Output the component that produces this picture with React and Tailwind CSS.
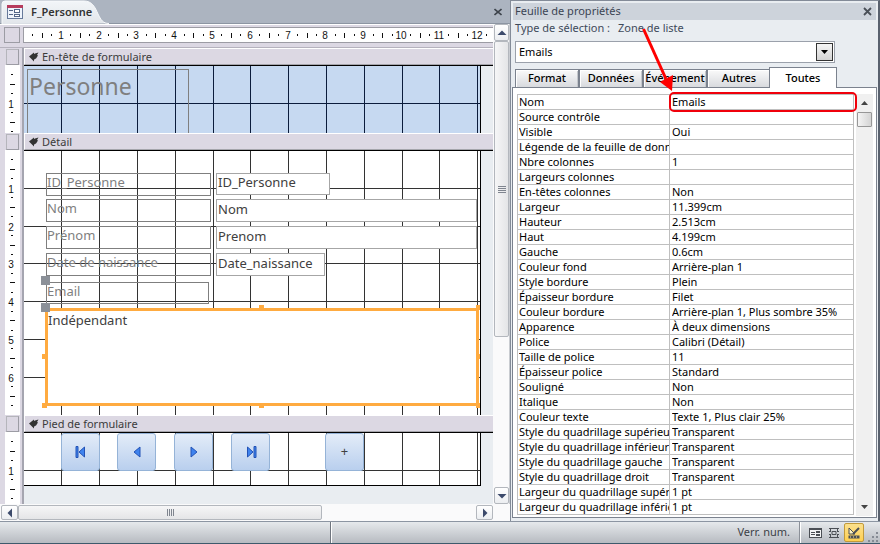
import React from "react";

const CM = 37.8;

const FONT = "font-['Noto_Sans','Open_Sans',sans-serif]";

const properties = [
  ["Nom", "Emails"],
  ["Source contrôle", ""],
  ["Visible", "Oui"],
  ["Légende de la feuille de données", ""],
  ["Nbre colonnes", "1"],
  ["Largeurs colonnes", ""],
  ["En-têtes colonnes", "Non"],
  ["Largeur", "11.399cm"],
  ["Hauteur", "2.513cm"],
  ["Haut", "4.199cm"],
  ["Gauche", "0.6cm"],
  ["Couleur fond", "Arrière-plan 1"],
  ["Style bordure", "Plein"],
  ["Épaisseur bordure", "Filet"],
  ["Couleur bordure", "Arrière-plan 1, Plus sombre 35%"],
  ["Apparence", "À deux dimensions"],
  ["Police", "Calibri (Détail)"],
  ["Taille de police", "11"],
  ["Épaisseur police", "Standard"],
  ["Souligné", "Non"],
  ["Italique", "Non"],
  ["Couleur texte", "Texte 1, Plus clair 25%"],
  ["Style du quadrillage supérieur", "Transparent"],
  ["Style du quadrillage inférieur", "Transparent"],
  ["Style du quadrillage gauche", "Transparent"],
  ["Style du quadrillage droit", "Transparent"],
  ["Largeur du quadrillage supérieur", "1 pt"],
  ["Largeur du quadrillage inférieur", "1 pt"],
];

/* Ruler graduations: dots on the quarters, a tick on the half, a number on each centimetre. */
function Ruler({ vertical = false, count }) {
  const marks = [];
  for (let i = 1; i < count * 4 + 4; i++) {
    const p = Math.round((i * CM) / 4) - (vertical ? 0 : 1);
    if (i % 4 === 0) {
      marks.push(
        <text key={i} x={vertical ? 6 : p} y={vertical ? p + 5 : 11} textAnchor="middle" fontSize="10">
          {i / 4}
        </text>
      );
    } else {
      const long = i % 4 === 2;
      const len = long ? 5 : 2;
      marks.push(
        vertical ? (
          <rect key={i} x={7 - Math.floor(len / 2)} y={p} width={len} height="1" />
        ) : (
          <rect key={i} x={p} y={7 - Math.floor(len / 2)} width="1" height={len} />
        )
      );
    }
  }
  return (
    <svg className="absolute inset-0 h-full w-full overflow-hidden font-['Liberation_Sans',sans-serif]" fill="#111" shapeRendering="crispEdges" aria-hidden="true">
      {marks}
    </svg>
  );
}

function Grid({ color }) {
  return (
    <svg className="absolute inset-0 h-full w-full" fill={color} shapeRendering="crispEdges" aria-hidden="true">
      {Array.from({ length: 12 }, (_, i) => (
        <rect key={"v" + i} x={Math.floor((i + 1) * CM)} y="0" width="1" height="100%" />
      ))}
      {Array.from({ length: 6 }, (_, i) => (
        <rect key={"h" + i} x="0" y={Math.round((i + 1) * CM)} width="100%" height="1" />
      ))}
    </svg>
  );
}

function Section({ title, height, count, surface, grid, children, last }) {
  return (
    <section className={last ? "flex min-h-0 flex-1 flex-col" : "flex flex-col"}>
      <div className="flex h-[17px] shrink-0">
        <div className="flex w-6 shrink-0 border-r-2 border-[#a5a5b0] bg-[#dcd8e3] pl-1.5 pt-px">
          <button type="button" aria-label={"Sélectionner " + title} className="h-4 w-[13px] border border-r-[#9c9ca4] border-b-[#9c9ca4] border-l-[#b5b5bb] border-t-[#b5b5bb] bg-[#dcd8e3]" />
        </div>
        <h2 className="flex min-w-0 flex-1 items-center gap-[3px] border-b border-l border-t border-b-[#a5a5ab] border-l-white border-t-white bg-[#dcd8e3] pl-1 pt-px text-[11px] font-normal text-[#3b3b3b]">
          <svg width="10" height="10" viewBox="0 0 10 10" fill="#333" aria-hidden="true">
            <path d="M0 4.500 5 .5V2l1-.5 3.500-1L8 3l1 .5-1 1.500C7 7 6 7 5 7.500V9.500z" />
          </svg>
          {title}
        </h2>
      </div>
      <div className={last ? "flex min-h-0 flex-1" : "flex"}>
        <div className="flex w-6 shrink-0 border-r-2 border-[#a5a5b0] bg-[#dcd8e3] pl-[5px]">
          <div className={"relative w-[15px] overflow-hidden bg-white " + (last ? "" : height)}>
            <Ruler vertical count={count} />
          </div>
        </div>
        <div className="min-w-0 flex-1 bg-[#e9edf1]">
          <div className="h-px bg-black" />
          <div className={"relative -mt-px w-[457px] overflow-hidden border-r border-t border-black " + height + " " + surface + (last ? " border-b" : "")}>
            <div className="absolute inset-x-0 -top-px bottom-0">
              <Grid color={grid} />
              {children}
            </div>
          </div>
        </div>
      </div>
    </section>
  );
}

const labels = [
  ["ID_Personne", "f-id", "top-[23px] h-[23px] w-[165px]"],
  ["Nom", "f-nom", "top-[49px] h-[23px] w-[165px]"],
  ["Prénom", "f-prenom", "top-[76px] h-[23px] w-[165px]"],
  ["Date de naissance", "f-date", "top-[103px] h-[23px] w-[165px]"],
  ["Email", "f-email", "top-[132px] h-[22px] w-[163px]"],
];

const fields = [
  ["ID_Personne", "f-id", "top-[23px] h-[22px] w-[114px]"],
  ["Nom", "f-nom", "top-[49px] h-[23px] w-[261px]"],
  ["Prenom", "f-prenom", "top-[76px] h-[23px] w-[261px]"],
  ["Date_naissance", "f-date", "top-[103px] h-[23px] w-[109px]"],
];

const handles = [
  "left-[235px] top-[155px]",
  "left-[452px] top-[155px]",
  "left-[18px] top-[204px]",
  "left-[452px] top-[204px]",
  "left-[18px] top-[253px]",
  "left-[235px] top-[253px]",
  "left-[452px] top-[253px]",
];

const navButtons = [
  ["Premier", "left-[37px]", <><path d="M1 .5h2v11H1z" /><path d="M9.500 1v10L4 6z" /></>],
  ["Précédent", "left-[93px]", <path d="M9 1v10L3 6z" />],
  ["Suivant", "left-[150px]", <path d="M3 1v10l6-5z" />],
  ["Dernier", "left-[207px]", <><path d="M2.500 1v10L8 6z" /><path d="M9 .5h2v11H9z" /></>],
];

const NAV =
  "absolute top-px flex h-[38px] w-[39px] items-center justify-center rounded-[3px] border border-[#95b3d7] bg-linear-to-b from-[#e3ecf8] to-[#b9cfee] ";

function Arrow({ d }) {
  return (
    <svg width="10" height="10" viewBox="0 0 10 10" fill="#3c4a6b" aria-hidden="true">
      <path d={d} />
    </svg>
  );
}

const SCROLL_BTN = "flex shrink-0 items-center justify-center rounded-[2px] border border-[#b3b7bd] bg-linear-to-b from-white to-[#eceef1] ";

function Designer() {
  return (
    <main className="flex min-w-0 flex-1 flex-col bg-white">
      <header className="flex h-6 shrink-0 items-start border-b border-[#8c95a2] bg-[#acb4c0]">
        <div className="relative h-6 w-[110px] shrink-0">
          <svg className="absolute inset-0" width="110" height="24" aria-hidden="true">
            <defs>
              <linearGradient id="tab" x1="0" y1="0" x2="0" y2="1">
                <stop offset="0" stopColor="#f2f5f8" />
                <stop offset="1" stopColor="#e2e6eb" />
              </linearGradient>
            </defs>
            <path d="M2 24V4Q2 1 5 1H84C92 1 95 7 98 14 101 20 103 23.500 109 23.500" fill="url(#tab)" stroke="#f7f9fb" />
          </svg>
          <button type="button" className="relative flex h-6 items-center gap-2 pl-[7px] text-[11px] font-semibold text-[#333]">
            <svg width="16" height="14" viewBox="0 0 16 14" shapeRendering="crispEdges" aria-hidden="true">
              <path d="M0 0h16v14H0z" fill="#66799a" />
              <path d="M1 3h14v10H1z" fill="#eef3fb" />
              <path d="M0 0h16v3H0z" fill="#b63b5c" />
              <path d="M2 5h4v1H2zM2 9h4v1H2zM7 4h6v4H7zM7 9h6v3H7z" fill="#536688" />
              <path d="M8 5h4v2H8zM8 10h4v1H8z" fill="#fff" />
            </svg>
            F_Personne
          </button>
        </div>
        <div className="flex-1" />
        <button type="button" aria-label="Fermer le formulaire" className="mr-2 flex h-6 w-2 items-center text-[#3e444c]">
          <svg width="8" height="8" viewBox="0 0 8 8" stroke="currentColor" strokeWidth="1.600" aria-hidden="true">
            <path d="m.5 1 7 6M7.500 1l-7 6" />
          </svg>
        </button>
      </header>

      <div className="flex min-h-0 flex-1 flex-col">
        <div className="flex min-h-0 flex-1">
          <div className="flex min-w-0 flex-1 flex-col bg-[#dcd8e3]">
            <div className="flex h-6 shrink-0 gap-[3px] border-b border-t border-b-[#b5b2bd] border-t-white bg-[#dcd8e3] pb-1 pl-1 pt-0.5">
              <button type="button" aria-label="Sélectionner le formulaire" className="h-4 w-4 border border-[#9c9ca4] bg-[#dcd8e3]" />
              <div className="relative min-w-0 flex-1 border border-r-0 border-[#9c9ca4] bg-white">
                <Ruler count={12} />
              </div>
            </div>

            <Section title="En-tête de formulaire" height="h-[68px]" count={1} surface="bg-[#c6d9f1]" grid="#0b1c3c">
              <div className="absolute left-[3px] top-1 h-20 w-[162px] border border-[#7f7f7f] pl-px text-[23px] leading-8 text-[#7f7f7f]">Personne</div>
            </Section>

            <Section title="Détail" height="h-[265px]" count={6} surface="bg-white" grid="#333">
              {labels.map(([text, id, box]) => (
                <label key={id} htmlFor={id} className={"absolute left-[22px] border border-[#7f7f7f] text-[13px] leading-4 text-[#7f7f7f] " + box}>
                  {text}
                </label>
              ))}
              {fields.map(([text, id, box]) => (
                <input key={id} id={id} readOnly value={text} className={"absolute left-48 border border-[#a6a6a6] bg-white px-px pb-1 text-[13px] text-[#404040] outline-none " + box} />
              ))}
              <select id="f-email" size={4} className="absolute left-[21px] top-[158px] h-[98px] w-[434px] appearance-none overflow-hidden border-[3px] border-[#ffab40] bg-white text-[13px] text-[#404040] outline-none">
                <option className="p-0 leading-4">Indépendant</option>
              </select>
              {handles.map((pos) => (
                <span key={pos} className={"absolute h-[5px] w-[5px] bg-[#ffab40] " + pos} />
              ))}
              <span className="absolute left-[17px] top-[126px] h-[9px] w-[9px] bg-[#8b9098]" />
              <span className="absolute left-[17px] top-[153px] h-[9px] w-[9px] bg-[#8b9098]" />
            </Section>

            <Section last title="Pied de formulaire" height="h-[54px]" count={1} surface="bg-white" grid="#333">
              {navButtons.map(([name, pos, shape]) => (
                <button key={name} type="button" aria-label={name} className={NAV + pos}>
                  <svg width="12" height="12" viewBox="0 0 12 12" fill="#3f83ee" stroke="#2352b5" strokeWidth="1" aria-hidden="true">
                    {shape}
                  </svg>
                </button>
              ))}
              <button type="button" className={NAV + "left-[301px] text-[13px] text-[#404040]"}>+</button>
            </Section>
          </div>

          <div className="flex w-[17px] shrink-0 flex-col border-r border-[#c9ccd1] bg-[#fafafb] pl-px">
            <button type="button" aria-label="Défiler vers le haut" className={SCROLL_BTN + "h-[17px]"}>
              <Arrow d="M5 2.500 9.500 7H.5z" />
            </button>
            <div className="flex h-[296px] items-center justify-center rounded-[2px] border border-[#b3b7bd] bg-linear-to-r from-[#f6f6f7] to-[#e4e5e7]">
              <div className="flex w-2 flex-col gap-px">
                <i className="h-px bg-[#7f858f]" />
                <i className="h-px bg-[#7f858f]" />
                <i className="h-px bg-[#7f858f]" />
                <i className="h-px bg-[#7f858f]" />
              </div>
            </div>
            <div className="flex-1" />
            <button type="button" aria-label="Défiler vers le bas" className={SCROLL_BTN + "h-[17px]"}>
              <Arrow d="M5 7.500 9.500 3H.5z" />
            </button>
          </div>
        </div>

        <div className="flex h-[17px] shrink-0 bg-[#fafafb] pb-px pl-px pr-[17px] pt-px">
          <button type="button" aria-label="Défiler vers la gauche" className={SCROLL_BTN + "w-[17px]"}>
            <Arrow d="M2.500 5 7 .5v9z" />
          </button>
          <div className="flex w-[304px] items-center justify-center gap-px rounded-[2px] border border-[#b3b7bd] bg-linear-to-b from-[#f6f6f7] to-[#e4e5e7]">
            <i className="h-[7px] w-px bg-[#7f858f]" />
            <i className="h-[7px] w-px bg-[#7f858f]" />
            <i className="h-[7px] w-px bg-[#7f858f]" />
            <i className="h-[7px] w-px bg-[#7f858f]" />
          </div>
          <div className="flex-1" />
          <button type="button" aria-label="Défiler vers la droite" className={SCROLL_BTN + "w-[17px]"}>
            <Arrow d="M7.500 5 3 .5v9z" />
          </button>
        </div>
      </div>
    </main>
  );
}

const TAB =
  "flex h-[18px] w-16 items-center justify-center border border-b-0 border-[#7b828e] bg-linear-to-b from-[#fafafa] to-[#d8dade] text-[11px] font-medium text-black shadow-[inset_1px_1px_0_#fff,inset_-1px_0_0_#c4c7cc]";

function PropertySheet() {
  return (
    <aside className="relative flex w-[370px] shrink-0 flex-col border-l border-r-2 border-t border-l-[#838b98] border-r-[#59616e] border-t-[#838b98] bg-[#e9edf1] pb-[3px] pl-px pr-px pt-0.5 text-[11px]">
      <div className="mx-px flex h-[17px] shrink-0 items-center justify-between bg-[#cdd3db] pl-0.5 pr-1 text-[11px] text-[#3b4453]">
        <h1>Feuille de propriétés</h1>
        <button type="button" aria-label="Fermer la feuille de propriétés" className="text-[#4a5058]">
          <svg width="9" height="9" viewBox="0 0 9 9" stroke="currentColor" strokeWidth="1.800" aria-hidden="true">
            <path d="m1 1 7 7M8 1 1 8" />
          </svg>
        </button>
      </div>
      <div className="flex h-[21px] shrink-0 gap-2 pl-[3px] leading-4 text-[#3f4a5a]">
        <span>Type de sélection :</span>
        <span>Zone de liste</span>
      </div>
      <div className="relative ml-[3px] mr-[42px] h-[22px] shrink-0">
        <select aria-label="Objet sélectionné" className="h-full w-full appearance-none border border-[#9ba1ab] bg-white pl-[3px] text-[11px] text-black">
          <option>Emails</option>
        </select>
        <span className="pointer-events-none absolute right-0.5 top-0.5 flex h-[18px] w-[17px] items-center justify-center border border-[#333] bg-linear-to-b from-[#f5f5f5] to-[#d4d4d4]">
          <svg width="7" height="4" viewBox="0 0 7 4" aria-hidden="true">
            <path d="M0 0h7L3.500 4z" />
          </svg>
        </span>
      </div>
      <div role="tablist" className="mt-1 flex shrink-0 items-end pl-[3px]">
        <button type="button" role="tab" className={TAB}>Format</button>
        <button type="button" role="tab" className={TAB}>Données</button>
        <button type="button" role="tab" className={TAB}>Événement</button>
        <button type="button" role="tab" className={TAB}>Autres</button>
        <button type="button" role="tab" aria-selected="true" className="relative -mb-px -ml-0.5 flex h-[21px] w-[68px] items-center justify-center border border-b-0 border-[#7b828e] bg-white text-[11px] font-medium text-black">
          Toutes
        </button>
      </div>
      <div className="flex min-h-0 flex-1 gap-0.5 border border-[#7b828e] bg-white pb-px pl-1 pr-[3px] pt-1.5">
        <div className="min-w-0 flex-1">
          <table className="w-full table-fixed border-collapse text-left text-black">
            <colgroup>
              <col className="w-[152px]" />
              <col />
            </colgroup>
            <tbody>
              {properties.map(([name, value], i) => (
                <tr key={name} className="h-[15px]">
                  <th scope="row" className="overflow-hidden whitespace-nowrap border border-[#bfbfbf] p-0 pl-px font-normal leading-[14px]">
                    <label htmlFor={"p" + i} className="block h-3.5 overflow-hidden">{name}</label>
                  </th>
                  <td className="border border-[#bfbfbf] p-0">
                    <input id={"p" + i} defaultValue={value} className="block h-3.5 w-full bg-transparent pl-0.5 leading-[14px] outline-none" />
                  </td>
                </tr>
              ))}
            </tbody>
          </table>
        </div>
        <div className="flex w-[17px] shrink-0 flex-col items-center bg-[#f0f0f0]">
          <button type="button" aria-label="Propriétés précédentes" className="flex h-[18px] w-full items-center justify-center">
            <svg width="7" height="4" viewBox="0 0 7 4" aria-hidden="true"><path d="M3.500 0 7 4H0z" fill="#444" /></svg>
          </button>
          <div className="h-[15px] w-[15px] rounded-[1px] border border-[#979797] bg-linear-to-r from-[#f4f4f4] to-[#d4d4d4]" />
          <div className="flex-1" />
          <button type="button" aria-label="Propriétés suivantes" className="flex h-[18px] w-full items-center justify-center">
            <svg width="7" height="4" viewBox="0 0 7 4" aria-hidden="true"><path d="M0 0h7L3.500 4z" fill="#444" /></svg>
          </button>
        </div>
      </div>
      <svg className="pointer-events-none absolute left-0 top-0" width="366" height="120" aria-hidden="true">
        <rect x="159" y="92" width="186" height="18" rx="4" fill="none" stroke="#f0000b" strokeWidth="2" />
        <path d="M132.500 28 155 78" stroke="#ff0000" strokeWidth="3" />
        <path d="m161 90-12-9 13-7z" fill="#ff0000" />
      </svg>
    </aside>
  );
}

function StatusBar() {
  return (
    <footer className="flex h-[23px] shrink-0 items-center border-b border-t border-b-[#3d5a6c] border-t-[#8c95a2] bg-linear-to-b from-[#e6e9ec] to-[#b7bbc1] text-[11px] text-[#3b3f46]">
      <div className="h-full w-[331px] border-r border-[#6f757e]" />
      <div className="h-full flex-1 border-l border-white" />
      <span className="pr-[9px]">Verr. num.</span>
      <div className="mr-2 h-full w-0.5 border-l border-r border-l-[#8b9098] border-r-white" />
      <button type="button" aria-label="Mode Formulaire" className="mr-1.5">
        <svg width="13" height="10" viewBox="0 0 13 10" shapeRendering="crispEdges" aria-hidden="true">
          <path d="M0 0h13v10H0z" fill="#4b4f55" />
          <path d="M1 2h11v7H1z" fill="#f3f4f5" />
          <path d="M2 4h4v1H2zM2 6h4v1H2zM7 3h4v2H7zM7 6h4v2H7z" fill="#4b4f55" />
        </svg>
      </button>
      <button type="button" aria-label="Mode Page" className="mr-1">
        <svg width="12" height="12" viewBox="0 0 12 12" fill="none" stroke="#4b4f55" aria-hidden="true">
          <path d="M1 1.500h10M1 10.500h10M2.500 1v3M9.500 1v3M2.500 8v3M9.500 8v3M4 4.500h4v3H4zM1 4.500h2M1 7.500h2M9 4.500h2M9 7.500h2" />
        </svg>
      </button>
      <button type="button" aria-label="Mode Création" className="flex h-[19px] w-5 items-center justify-center rounded-[2px] border border-[#c29a3a] bg-linear-to-b from-[#fbe08c] to-[#ffd04f]">
        <svg width="12" height="12" viewBox="0 0 12 12" aria-hidden="true">
          <path d="M1 1v6h6z" fill="#fff3c4" stroke="#4b4f55" />
          <path d="M11 1 5 7" stroke="#4b4f55" strokeWidth="2" />
          <path d="M.5 8.500h11v3H.5z" fill="#4b4f55" />
          <path d="M2 9.500h1v1H2zM5 9.500h1v1H5zM8 9.500h1v1H8z" fill="#ffe9a0" />
        </svg>
      </button>
      <svg className="ml-1 self-end" width="12" height="12" viewBox="0 0 12 12" fill="#858b94" aria-hidden="true">
        <path d="M8 1h2v2H8zM8 5h2v2H8zM8 9h2v2H8zM4 5h2v2H4zM4 9h2v2H4zM0 9h2v2H0z" />
      </svg>
    </footer>
  );
}

export default function App() {
  return (
    <div className={"flex min-h-screen flex-col bg-[#acb4c0] " + FONT}>
      <div className="flex flex-1">
        <Designer />
        <PropertySheet />
      </div>
      <StatusBar />
    </div>
  );
}
